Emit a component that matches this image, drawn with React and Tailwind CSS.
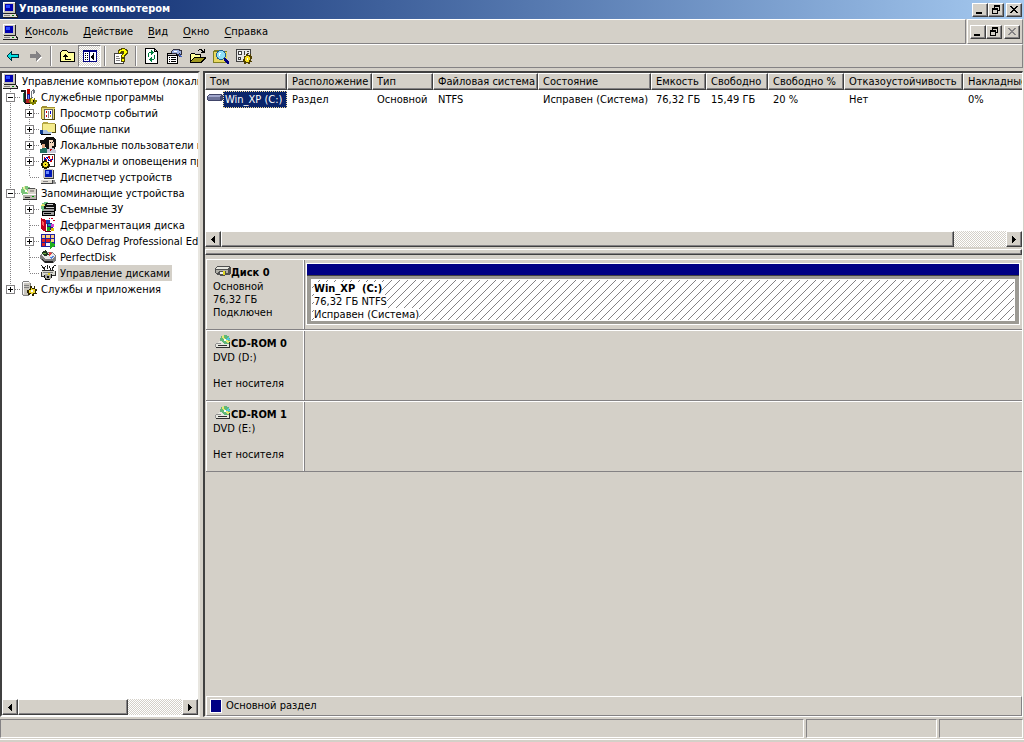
import React, { useState } from 'react';

/* ---------- icons ---------- */

function Icon({ children, className = '' }) {
  return (
    <svg viewBox="0 0 16 16" shapeRendering="crispEdges" className={`w-4 h-4 shrink-0 ${className}`} aria-hidden="true">
      {children}
    </svg>
  );
}

const ComputerIcon = () => (
  <Icon>
    <path d="M1 0h12v11H1z" fill="#c6c3bd" />
    <path d="M1 0h12v1H1zM1 0h1v10H1z" fill="#fff" />
    <path d="M3 2h8v7H3z" fill="#0000b0" />
    <path d="M4 3h4v3H4z" fill="#2a4cff" />
    <path d="M13 1h1v10h-1zM2 11h12v1H2z" fill="#202020" />
    <path d="M1 12h12l2 2v1H1z" fill="#dedbd2" />
    <path d="M2 13h6v1H2z" fill="#848284" />
    <path d="M10 13h2v1h-2z" fill="#008000" />
    <path d="M1 15h15v1H1zM14 12h1v1h1v3h-1v-2h-1z" fill="#202020" />
  </Icon>
);

const ToolsIcon = () => (
  <Icon>
    <path d="M0 1h5v2H0zM3 3h2v11H3z" fill="#202020" />
    <path d="M2 4h1v9H2z" fill="#2e8b57" />
    <path d="M6 0h3v5H6z" fill="#c00000" />
    <path d="M6 5h3v9H6z" fill="#1a1a90" />
    <path d="M7 6h1v7H7z" fill="#6b8cff" />
    <path d="M10 2l2-2 2 1v3l-2 1v4h-2z" fill="#707880" />
    <path d="M11 2h1v6h-1z" fill="#fff" />
    <path d="M5 10h4v4H5z" fill="#b02020" />
    <path d="M9 9h2v1h2V9h1v2h2v2h-1v2h-2v1h-2v-1H9v-2H8v-2h1z" fill="#808000" />
    <path d="M10 10h3v3h-3z" fill="#f0e040" />
    <path d="M12 11h1v2h-1zM4 14h5v1H4z" fill="#000" />
  </Icon>
);

const EventsIcon = () => (
  <Icon>
    <path d="M1 2l1-1h4l1 1h8v12H1z" fill="#e8dc7a" />
    <path d="M1 2l1-1h4l1 1h8v1H1zM1 2h1v12H1z" fill="#a09030" />
    <path d="M4 4h9v10H4z" fill="#fff" />
    <path d="M4 4h9v1H4zM4 4h1v10H4zM12 4h1v10h-1z" fill="#606060" />
    <path d="M6 6h1v2H6zM6 10h1v2H6z" fill="#d00000" />
    <path d="M8 6h1v7H8z" fill="#848284" />
    <path d="M10 6h1v3h-1z" fill="#0000c0" />
    <path d="M10 10h1v2h-1z" fill="#c8a000" />
    <path d="M2 14h13v1H2zM14 4h1v11h-1z" fill="#504810" />
  </Icon>
);

const SharedFolderIcon = () => (
  <Icon>
    <path d="M2 2l1-1h4l1 1h7v9H2z" fill="#f5eb8c" />
    <path d="M2 2l1-1h4l1 1h7v1H2zM2 2h1v8H2z" fill="#b5a642" />
    <path d="M15 3h1v9h-1zM7 11h9v1H7z" fill="#504810" />
    <path d="M0 9h3v4H0z" fill="#0a3a90" />
    <path d="M3 9h3l2 2h4v1l-2 1H3z" fill="#a8c0e0" />
    <path d="M3 13h8v1H3zM1 13h2v1H1z" fill="#000" />
  </Icon>
);

const UsersIcon = () => (
  <Icon>
    <path d="M4 2l3-2h6l3 3v6l-2 4H8L4 9z" fill="#101010" />
    <path d="M9 3h4v2h1v4h-2v2H9z" fill="#f4d8c0" />
    <path d="M10 5h1v1h-1zM12 5h1v1h-1z" fill="#101010" />
    <path d="M0 3h4l2 2v5H3L1 8z" fill="#101010" />
    <path d="M2 7h3v4H2z" fill="#e0a880" />
    <path d="M0 12l3-1h3l2 2v3H0z" fill="#207060" />
    <path d="M7 12l3-1h3l3 2v3H7z" fill="#c8c8d8" />
    <path d="M10 12l1 3 1-3z" fill="#c00000" />
  </Icon>
);

const PerfLogsIcon = () => (
  <Icon>
    <path d="M2 1h12v11H2z" fill="#fff" />
    <path d="M2 1h13v1H2zM2 1h1v12H2zM14 1h1v13h-1zM8 13h7v1H8z" fill="#303030" />
    <path d="M4 4l2 4 3-5 2 6 2-6" fill="none" stroke="#d00000" />
    <path d="M4 8l3-4 2 4 4-2" fill="none" stroke="#0000c0" />
    <path d="M4 7h2v1h1v1h2v2h1v2H9v2H7v1H4v-1H2v-2H1v-3h2V8h1z" fill="#202000" />
    <path d="M4 9h3v1h1v3H7v1H4v-1H3v-3h1z" fill="#f0e020" />
    <path d="M5 11h1v1H5z" fill="#000" />
  </Icon>
);

const DeviceIcon = () => (
  <Icon>
    <path d="M3 0h10v9H3z" fill="#c6c3bd" />
    <path d="M5 1h7v7H5z" fill="#0018b8" />
    <path d="M6 2h3v3H6z" fill="#6b8cff" />
    <path d="M13 1h1v9h-1zM4 9h9v1H4z" fill="#404040" />
    <path d="M1 11h11v3H1z" fill="#dedbd2" />
    <path d="M1 14h12v1H1zM12 11h1v3h-1z" fill="#404040" />
    <path d="M3 12h5v1H3z" fill="#848284" />
    <path d="M13 11h2v2h1v2h-3z" fill="#909090" />
  </Icon>
);

const StorageIcon = () => (
  <Icon>
    <circle cx="5" cy="6" r="5" fill="#7ac47a" />
    <path d="M5 6L1 3l3-2zM5 6h4l-1 4z" fill="#e8f0a0" />
    <circle cx="5" cy="6" r="1" fill="#fff" />
    <path d="M7 3h7l1 1v6H7z" fill="#d8d5cc" />
    <path d="M7 3h7v1H7zM15 4h1v11h-1z" fill="#505050" />
    <path d="M9 5h4v2H9z" fill="#a09c94" />
    <path d="M2 9h13v5H2z" fill="#b8b5ad" />
    <path d="M2 9h13v1H2z" fill="#fff" />
    <path d="M2 14h14v1H2zM4 12h5v1H4z" fill="#303030" />
    <path d="M11 11h2v1h-2z" fill="#00a000" />
  </Icon>
);

const RemovableIcon = () => (
  <Icon>
    <circle cx="6" cy="6" r="5" fill="#6cbf80" />
    <path d="M6 6L1 5l2-3z" fill="#e8e860" />
    <path d="M6 2h8l2 2v5l-2 2H4V6z" fill="#101010" />
    <path d="M7 3h6v1H7zM6 6h8v1H6z" fill="#d0d0d0" />
    <path d="M2 10l3-2h8l2 2v4H2z" fill="#a0a0a0" />
    <path d="M2 10h12v1H2zM2 14h13v1H2zM2 10h1v5H2zM14 9h1v5h-1zM4 12h7v1H4z" fill="#000" />
  </Icon>
);

const DefragIcon = () => (
  <Icon>
    <path d="M1 1l5 2v12l-5-3z" fill="#c00020" />
    <path d="M2 4l2 1v4L2 8z" fill="#ff6060" />
    <path d="M6 3h4v4H6z" fill="#2040c0" />
    <path d="M7 6h5l2 3-2 4H7z" fill="#202080" />
    <path d="M8 7h3v2H8z" fill="#00b0b0" />
    <path d="M11 7h3v3h-3z" fill="#d040d0" />
    <path d="M7 10h3v4H7z" fill="#20a020" />
    <path d="M11 11h3v3h-3z" fill="#e0c000" />
    <path d="M11 1h2v1h-2zM13 3h2v1h-2zM9 1h1v1H9z" fill="#c00020" />
    <path d="M5 14h6v1H5z" fill="#600010" />
  </Icon>
);

const OODefragIcon = () => (
  <Icon>
    <path d="M1 1h14v13H1z" fill="#2020a0" />
    <path d="M2 2h3v3H2zM6 2h4v3H6zM11 2h3v3h-3z" fill="#ffd080" />
    <path d="M2 6h3v3H2zM6 6h4v3H6z" fill="#e02020" />
    <path d="M11 6h3v3h-3z" fill="#ffd080" />
    <path d="M2 10h3v3H2z" fill="#e02020" />
    <path d="M6 10h4v3H6zM11 10h3v3h-3z" fill="#f4f4ff" />
    <path d="M10 8l6 4-6 4z" fill="#20b020" />
  </Icon>
);

const PerfectDiskIcon = () => (
  <Icon>
    <path d="M0 6l3-3h9l4 4v4l-3 3H5l-5-4z" fill="#808080" />
    <path d="M1 6l3-2h8l3 3-3 3H5z" fill="#e8e8e8" />
    <path d="M1 4l5-3 3 5-5 1z" fill="#203820" />
    <path d="M3 4h3v1H3z" fill="#70b040" />
    <path d="M9 3l4 1-4 3z" fill="#e04040" />
    <path d="M10 8l4-1-3 3z" fill="#5080e0" />
    <path d="M2 10l3 2h8v1l-1 1H5l-3-3z" fill="#202020" />
  </Icon>
);

const DiskMgmtIcon = () => (
  <Icon>
    <path d="M1 0h1v1h1v1h1v1h1v2H4V4H3V3H2V1H1zM5 1h1v1H5zM4 2h1v1H4zM7 0h1v4H7zM9 1h1v2h1v2h-1V3H9zM12 2h1V1h1v2h-1v2h-1zM14 0h2v1h-2z" fill="#202020" />
    <path d="M2 6l2-1h9l2 2v4H1V7z" fill="#d8d8d0" />
    <path d="M2 5h12v1H2zM1 7h1v4H1zM1 11h4v1H1zM15 6h1v5h-1zM11 10h4v1h-4z" fill="#303030" />
    <path d="M3 7h10v1H3z" fill="#808080" />
    <path d="M5 9h6v5H5z" fill="#a8a8a0" />
    <path d="M4 10h1v3H4zM5 13h1v1h4v1H5zM11 9h1v4h-1zM7 11h2v2H7z" fill="#101010" />
    <path d="M8 8h2v2H8z" fill="#e0d020" />
  </Icon>
);

const ServicesIcon = () => (
  <Icon>
    <path d="M2 1h6l1 1v12H2z" fill="#c8c5bd" />
    <path d="M2 1h6v1H2zM2 1h1v12H2z" fill="#f8f8f8" />
    <path d="M2 0h6v1H2zM1 1h1v13H1zM3 4h5v1H3zM3 6h5v1H3zM9 2h1v4H9zM2 14h6v1H2z" fill="#808080" />
    <path d="M9 5h2v2h2V5h1v3h2v2h-1v2h1v1h-3v2h-2v-2H9v1H7v-2H6v-3h2V8h1z" fill="#302800" />
    <path d="M10 7h1v1h3v4h-2v1h-2v-1H8V9h2z" fill="#f0d830" />
    <path d="M10 9h2v2h-2z" fill="#fff" />
  </Icon>
);

const BackIcon = () => (
  <Icon>
    <path d="M1 8h1V7h1V6h1V5h1V4h1V3h1v3h7v4H7v3H6v-1H5v-1H4v-1H3V9H2v-1z" fill="#003040" />
    <path d="M2 8h1V7h1V6h1V5h1v2h7v2H6v2H5v-1H4V9H3V8z" fill="#00e0e0" />
  </Icon>
);

const ForwardIcon = () => (
  <Icon>
    <path d="M15 9h-1v1h-1v1h-1v1h-1v1h-1v1H9v-4H3V9h9z" fill="#fff" />
    <path d="M14 8h-1V7h-1V6h-1V5h-1V4H9V3H8v3H2v4h6v3h1v-1h1v-1h1v-1h1V9h1V8z" fill="#848284" />
  </Icon>
);

const UpFolderIcon = () => (
  <Icon>
    <path d="M1 4h1V3h1V2h5v1h1v1h7v10H1z" fill="#000" />
    <path d="M2 4h1V3h5v1h1v1h6v8H2z" fill="#ffff9c" />
    <path d="M6 6h1v1h1v1h1v1H7v2h5v1H6V9H4V8h1V7h1z" fill="#000" />
  </Icon>
);

const TreePaneIcon = () => (
  <Icon>
    <path d="M1 2h14v12H1z" fill="#000080" />
    <path d="M2 4h5v9H2zM8 4h6v9H8z" fill="#fff" />
    <path d="M3 5h1v1H3zM5 5h1v1H5zM3 7h1v1H3zM5 7h1v1H5zM3 9h1v1H3zM5 9h1v1H5zM3 11h1v1H3zM5 11h1v1H5zM12 5v7h-1v-1h-1v-1H9V8h1V7h1V5z" fill="#000" />
  </Icon>
);

const HelpIcon = () => (
  <Icon>
    <path d="M1 5h10v11H1z" fill="#404040" />
    <path d="M2 6h8v9H2z" fill="#fff" />
    <path d="M3 8h3v1H3zM3 10h4v1H3zM3 12h4v1H3z" fill="#848284" />
    <path d="M5 2h1V1h2V0h4v1h2v1h1v4h-1v1h-1v1h-1v2H8V7h1V6h1V5H8v1H5zM8 10h4v4H8z" fill="#504800" />
    <path d="M6 3h1V2h2V1h3v1h1v1h1v2h-1v1h-1v1h-1v2H9V7h1V6h1V3H8v1H7v1H6zM9 11h2v2H9z" fill="#ffff00" />
  </Icon>
);

const RefreshIcon = () => (
  <Icon>
    <path d="M1 0h10v1h1v1h1v1h1v13H1z" fill="#000" />
    <path d="M2 1h8v3h3v11H2z" fill="#fff" />
    <path d="M11 2v1h1z" fill="#c6c3c6" />
    <path d="M7 2h1v1h1v1h1v1H9v1H8v1H7V5H5v4H4V5h1V4h2zM8 14H7v-1H6v-1H5v-1h1v-1h1V9h1v2h2V7h1v4h-1v1H8z" fill="#008040" />
  </Icon>
);

const PropertiesIcon = () => (
  <Icon>
    <path d="M0 5h11v11H0z" fill="#000" />
    <path d="M1 8h9v7H1z" fill="#fff" />
    <path d="M1 6h8v1H1z" fill="#c6c3c6" />
    <path d="M2 9h1v1H2zM4 9h5v1H4zM2 11h1v1H2zM4 11h5v1H4zM2 13h1v1H2zM4 13h5v1H4z" fill="#000" />
    <path d="M3 4l3-3h7v1h2v5h-2v2h-1L9 6H6z" fill="#303040" />
    <path d="M5 3l2-1h5l1 2-2 2-2-1H5zM13 3h1v3h-1z" fill="#9cb0e0" />
    <path d="M7 3h3v1H7z" fill="#fff" />
    <path d="M12 6l3 3h-1l-3-2z" fill="#4060c0" />
  </Icon>
);

const OpenIcon = () => (
  <Icon>
    <path d="M0 6h1V5h4v1h6v3h5v1l-4 5H0z" fill="#000" />
    <path d="M1 6h4v1h5v2H4l-3 4z" fill="#ffff9c" />
    <path d="M4 10h10l-3 4H1z" fill="#a09820" />
    <path d="M8 2h1V1h3v1h1v1h1V1h1v4h-4V4h1V3h-1V2H9v1H8z" fill="#000" />
  </Icon>
);

const SearchIcon = () => (
  <Icon>
    <path d="M0 3l1-1h4l1 1h8v11H0z" fill="#e8d860" />
    <path d="M0 3l1-1h4l1 1h8v1H0zM0 3h1v11H0zM0 14h14v1H0z" fill="#808020" />
    <circle cx="8" cy="7" r="5" fill="#206090" />
    <circle cx="8" cy="7" r="4" fill="#90e0f8" />
    <path d="M6 5h2v1H7v2H6z" fill="#fff" />
    <path d="M11 10h2l3 4v2h-2l-3-4z" fill="#000080" />
  </Icon>
);

const SettingsIcon = () => (
  <Icon>
    <path d="M0 1h15v13H0z" fill="#404040" />
    <path d="M1 2h13v11H1z" fill="#e8e8e8" />
    <path d="M2 3h4v4H2zM8 3h1v4H8zM11 3h2v1h-2zM11 5h2v1h-2zM2 9h3v3H2z" fill="#404040" />
    <path d="M3 4h2v2H3zM3 10h1v1H3z" fill="#fff" />
    <path d="M10 6h2v1h2V6h1v2h1v3h-1v2h1v1h-2v2h-2v-1h-2v1H8v-2H7v-3h1V8h2z" fill="#504000" />
    <path d="M10 8h3v1h1v3h-1v2h-3v-1H9V9h1z" fill="#f8e020" />
    <path d="M11 10h1v2h-1z" fill="#fff" />
  </Icon>
);

const VolumeIcon = () => (
  <Icon>
    <path d="M0 5l2-2h12l2 1v4l-2 2H1L0 9z" fill="#404468" />
    <path d="M1 5l1-1h12l-1 2H1z" fill="#a0a6cc" />
    <path d="M1 6h12v3H1z" fill="#6c7298" />
  </Icon>
);

const HardDiskIcon = () => (
  <Icon>
    <path d="M0 5l3-2h12l1 2v5l-2 2H2l-2-2z" fill="#505050" />
    <path d="M1 5l2-1h11l-1 2H1z" fill="#e8e8e0" />
    <path d="M1 7h12v3H1z" fill="#b0b0a8" />
    <path d="M4 8h7v4l-2 1H5l-2-2z" fill="#505050" />
    <path d="M5 9h3v2H5z" fill="#f0f0f0" />
    <path d="M8 8h2v4H8z" fill="#e0d820" />
  </Icon>
);

const CdIcon = () => (
  <Icon>
    <circle cx="10" cy="6" r="5" fill="#60b878" />
    <path d="M10 6L6 3l3-2zM10 6l3 4 2-3z" fill="#e8e870" />
    <path d="M10 6l4-3 1 3z" fill="#50c8e0" />
    <circle cx="10" cy="6" r="1" fill="#fff" />
    <path d="M1 10l3-3h2l3 3h5v3H1z" fill="#e8e8e0" />
    <path d="M14 8h1v5h-1zM1 13h14v1H1zM3 11h9v1H3z" fill="#303030" />
    <path d="M0 10h1v3H0zM1 9h5v1H1z" fill="#909090" />
  </Icon>
);

/* ---------- small controls ---------- */

const raised = 'bg-[#d4d0c8] border border-t-white border-l-white border-r-[#404040] border-b-[#404040] shadow-[inset_-1px_-1px_0_#848284]';

function CaptionButton({ kind, disabled }) {
  return (
    <button aria-label={kind} disabled={disabled} className={`w-4 h-[14px] grid place-items-center ${raised}`}>
      <svg viewBox="0 0 12 10" shapeRendering="crispEdges" className="w-3 h-[10px]">
        {kind === 'minimize' && <path d="M2 7h6v2H2z" />}
        {kind === 'restore' && <path d="M4 0h6v6H8V5h1V2H5v1H4zM2 3h6v6H2zM3 5v3h4V5z" fillRule="evenodd" />}
        {kind === 'close' && (
          <path
            d="M2 1h2v1h1v1h2V2h1V1h2v1H9v1H8v1H7v1h1v1h1v1h1v1H8V7H7V6H5v1H4v1H2V7h1V6h1V5h1V4H4V3H3V2H2z"
            fill={disabled ? '#848284' : '#000'}
          />
        )}
      </svg>
    </button>
  );
}

function CaptionButtons({ closeDisabled }) {
  return (
    <div className="flex">
      <CaptionButton kind="minimize" />
      <CaptionButton kind="restore" />
      <div className="ml-0.5 flex">
        <CaptionButton kind="close" disabled={closeDisabled} />
      </div>
    </div>
  );
}

function ScrollBar({ thumb }) {
  return (
    <div className="flex h-4 shrink-0 bg-[repeating-conic-gradient(#ffffff_0_25%,#d4d0c8_0_50%)] bg-[length:2px_2px]">
      <button aria-label="scroll left" className={`w-4 grid place-items-center ${raised}`}>
        <svg viewBox="0 0 4 7" shapeRendering="crispEdges" className="w-1 h-[7px]"><path d="M4 0v7L0 4V3z" /></svg>
      </button>
      <div className="grow">
        <div className={`h-full ${raised}`} style={{ width: `${thumb}%` }}></div>
      </div>
      <button aria-label="scroll right" className={`w-4 grid place-items-center ${raised}`}>
        <svg viewBox="0 0 4 7" shapeRendering="crispEdges" className="w-1 h-[7px]"><path d="M0 0v7l4-3V3z" /></svg>
      </button>
    </div>
  );
}

/* ---------- data ---------- */

const menus = ['Консоль', 'Действие', 'Вид', 'Окно', 'Справка'];

const tree = [
  {
    label: 'Служебные программы', icon: ToolsIcon, children: [
      { label: 'Просмотр событий', icon: EventsIcon, more: true },
      { label: 'Общие папки', icon: SharedFolderIcon, more: true },
      { label: 'Локальные пользователи и группы', icon: UsersIcon, more: true },
      { label: 'Журналы и оповещения производительности', icon: PerfLogsIcon, more: true },
      { label: 'Диспетчер устройств', icon: DeviceIcon },
    ],
  },
  {
    label: 'Запоминающие устройства', icon: StorageIcon, children: [
      { label: 'Съемные ЗУ', icon: RemovableIcon, more: true },
      { label: 'Дефрагментация диска', icon: DefragIcon },
      { label: 'O&O Defrag Professional Edition', icon: OODefragIcon, more: true },
      { label: 'PerfectDisk', icon: PerfectDiskIcon },
      { label: 'Управление дисками', icon: DiskMgmtIcon },
    ],
  },
  { label: 'Службы и приложения', icon: ServicesIcon, more: true },
];

const columns = [
  { title: 'Том', width: 'w-[82px]' },
  { title: 'Расположение', width: 'w-[85px]', value: 'Раздел' },
  { title: 'Тип', width: 'w-[61px]', value: 'Основной' },
  { title: 'Файловая система', width: 'w-[105px]', value: 'NTFS' },
  { title: 'Состояние', width: 'w-[113px]', value: 'Исправен (Система)' },
  { title: 'Емкость', width: 'w-[55px]', value: '76,32 ГБ' },
  { title: 'Свободно', width: 'w-[62px]', value: '15,49 ГБ' },
  { title: 'Свободно %', width: 'w-[76px]', value: '20 %' },
  { title: 'Отказоустойчивость', width: 'w-[119px]', value: 'Нет' },
  { title: 'Накладные расходы', width: 'w-[120px]', value: '0%' },
];

const cdroms = [
  { name: 'CD-ROM 0', letter: 'DVD (D:)' },
  { name: 'CD-ROM 1', letter: 'DVD (E:)' },
];

/* ---------- tree ---------- */

// One indent step: dotted connector with an optional +/- box over it
function Branch({ line, box, onToggle }) {
  const lines = {
    tee: 'M8.5 0v16M9 8.5h10',
    corner: 'M8.5 0v8M9 8.5h10',
    pass: 'M8.5 0v16',
    none: '',
  };
  return (
    <div className="grid w-[19px] h-4 shrink-0">
      <svg viewBox="0 0 19 16" shapeRendering="crispEdges" className="col-start-1 row-start-1 w-[19px] h-4">
        <path d={lines[line]} fill="none" stroke="#848284" strokeDasharray="1 1" />
      </svg>
      {box && (
        <button aria-label="toggle" onClick={onToggle} className="col-start-1 row-start-1 w-[9px] h-[9px] ml-1 mt-1 bg-white">
          <svg viewBox="0 0 9 9" shapeRendering="crispEdges" className="w-[9px] h-[9px]">
            <path d="M0 0h9v9H0zM1 1v7h7V1z" fill="#848284" fillRule="evenodd" />
            <path d={box === 'plus' ? 'M2 4h5v1H2zM4 2h1v5H4z' : 'M2 4h5v1H2z'} />
          </svg>
        </button>
      )}
    </div>
  );
}

function TreeLabel({ icon: NodeIcon, label, selected }) {
  return (
    <>
      <NodeIcon />
      <span className={`ml-0.5 px-0.5 pt-0.5 leading-[14px] ${selected ? 'bg-[#d4d0c8]' : ''}`}>{label}</span>
    </>
  );
}

function Tree() {
  const [closed, setClosed] = useState({});
  const [selected, setSelected] = useState('Управление дисками');

  const toggle = (label) => setClosed((prev) => ({ ...prev, [label]: !prev[label] }));

  return (
    <ul className="grow overflow-hidden whitespace-nowrap">
      <li className="flex h-4">
        <TreeLabel icon={ComputerIcon} label="Управление компьютером (локальным)" />
      </li>
      {tree.map((node, i) => {
        const last = i === tree.length - 1;
        const open = node.children && !closed[node.label];
        return (
          <li key={node.label}>
            <div className="flex h-4">
              <Branch line={last ? 'corner' : 'tee'} box={open ? 'minus' : 'plus'} onToggle={() => toggle(node.label)} />
              <TreeLabel icon={node.icon} label={node.label} />
            </div>
            {open && (
              <ul>
                {node.children.map((child, j) => (
                  <li key={child.label} className="flex h-4" onClick={() => setSelected(child.label)}>
                    <Branch line={last ? 'none' : 'pass'} />
                    <Branch line={j === node.children.length - 1 ? 'corner' : 'tee'} box={child.more && 'plus'} />
                    <TreeLabel icon={child.icon} label={child.label} selected={selected === child.label} />
                  </li>
                ))}
              </ul>
            )}
          </li>
        );
      })}
    </ul>
  );
}

/* ---------- toolbar ---------- */

function ToolButton({ label, pressed, children }) {
  return (
    <button
      aria-label={label}
      className={`w-[23px] h-[22px] grid place-items-center ${pressed ? 'border border-t-[#848284] border-l-[#848284] border-r-white border-b-white bg-[repeating-conic-gradient(#ffffff_0_25%,#d4d0c8_0_50%)] bg-[length:2px_2px]' : ''}`}
    >
      {children}
    </button>
  );
}

const Separator = () => <div className="w-0.5 h-5 mx-[3px] border-l border-l-[#848284] border-r border-r-white"></div>;

/* ---------- disks ---------- */

function DiskRow({ icon: DiskIcon, name, lines, children }) {
  return (
    <div className="flex h-[71px] border-t border-t-white border-b border-b-[#848284]">
      <div className="w-[98px] shrink-0 pt-1.5 pl-1.5 border-x border-x-white leading-[13px]">
        <div className="flex items-end h-[13px] mb-px pl-0.5 font-bold whitespace-nowrap">
          <DiskIcon />
          {name}
        </div>
        {lines.map((line, i) => (
          <div key={i} className="h-[13px]">{line}</div>
        ))}
      </div>
      <div className="grow border-l border-l-[#848284]">{children}</div>
    </div>
  );
}

function Partition() {
  return (
    <div className="mt-[3px] mx-px mr-0.5 border border-white bg-[#9c9a94]">
      <div className="h-3 bg-[#000084] border-b border-b-[#404040]"></div>
      <div className="px-1 py-[3px]">
        <div className="h-[42px] border border-white pt-0.5 pl-0.5 leading-[13px] bg-white bg-[linear-gradient(135deg,transparent_46%,#848284_46%_54%,transparent_54%)] bg-[length:8px_8px]">
          <div><span className="bg-white font-bold whitespace-pre">Win_XP  (C:)</span></div>
          <div><span className="bg-white">76,32 ГБ NTFS</span></div>
          <div><span className="bg-white">Исправен (Система)</span></div>
        </div>
      </div>
    </div>
  );
}

function App() {
  return (
    <div className="flex flex-col h-screen overflow-hidden bg-[#d4d0c8] text-black text-[11px] font-['DejaVu_Sans_Condensed','DejaVu_Sans',sans-serif]">
      <header className="flex items-center h-[19px] shrink-0 pl-0.5 pr-0.5 bg-linear-to-r from-[#0a246a] to-[#a6caf0] text-white">
        <ComputerIcon />
        <h1 className="grow ml-px font-bold">Управление компьютером</h1>
        <CaptionButtons />
      </header>

      <div className="flex h-[25px] shrink-0 pr-px">
        <nav className="flex grow items-center pl-0.5 border-t border-t-white border-b border-b-[#848284] border-r border-r-[#848284]">
          <ComputerIcon />
          <div className="flex">
            {menus.map((item) => (
              <button key={item} className="pl-[7px] pr-2 pt-px">
                <span className="underline underline-offset-2">{item[0]}</span>{item.slice(1)}
              </button>
            ))}
          </div>
        </nav>
        <div className="flex items-center px-0.5 ml-px border-t border-t-white border-l border-l-white border-b border-b-[#848284] border-r border-r-[#848284]">
          <CaptionButtons closeDisabled />
        </div>
      </div>

      <div className="flex items-center h-6 shrink-0 mr-px pl-px border-t border-t-white border-b border-b-[#848284] border-r border-r-[#848284]">
        <ToolButton label="Назад"><BackIcon /></ToolButton>
        <ToolButton label="Вперед"><ForwardIcon /></ToolButton>
        <Separator />
        <ToolButton label="Вверх"><UpFolderIcon /></ToolButton>
        <ToolButton label="Дерево консоли" pressed><TreePaneIcon /></ToolButton>
        <Separator />
        <ToolButton label="Справка"><HelpIcon /></ToolButton>
        <Separator />
        <ToolButton label="Обновить"><RefreshIcon /></ToolButton>
        <ToolButton label="Свойства"><PropertiesIcon /></ToolButton>
        <ToolButton label="Открыть"><OpenIcon /></ToolButton>
        <ToolButton label="Найти"><SearchIcon /></ToolButton>
        <ToolButton label="Параметры"><SettingsIcon /></ToolButton>
      </div>

      <main className="flex grow min-h-0 gap-[3px] mt-[3px] pr-px">
        <aside className="flex flex-col w-[200px] shrink-0 bg-white border-2 border-t-[#404040] border-l-[#404040] border-r-[#e8e6e0] border-b-white">
          <Tree />
          <ScrollBar thumb={67} />
        </aside>

        <section className="flex flex-col grow min-w-0 border-t-2 border-l-2 border-r border-b border-t-[#404040] border-l-[#404040] border-r-white border-b-white">
          <div className="flex flex-col h-[174px] shrink-0 bg-white overflow-hidden">
            <div className="grow overflow-hidden">
              <table className="table-fixed w-[878px] whitespace-nowrap border-separate border-spacing-0">
                <thead>
                  <tr>
                    {columns.map((col) => (
                      <th key={col.title} className={`${col.width} h-[17px] p-0 pl-1 pt-px text-left font-normal leading-[14px] overflow-hidden ${raised}`}>
                        {col.title}
                      </th>
                    ))}
                  </tr>
                </thead>
                <tbody>
                  <tr>
                    {columns.map((col, i) => (
                      i === 0 ? (
                        <td key={col.title} className="p-0 pl-0.5 pt-px">
                          <div className="flex h-[17px]">
                            <VolumeIcon />
                            <span className="grow pl-px leading-[15px] bg-[#0a246a] text-white border border-dotted border-[#f5db95]">Win_XP (C:)</span>
                          </div>
                        </td>
                      ) : (
                        <td key={col.title} className="p-0 pl-[5px] pt-0.5">{col.value}</td>
                      )
                    ))}
                  </tr>
                </tbody>
              </table>
            </div>
            <ScrollBar thumb={93.4} />
          </div>

          <div className={`h-1.5 mt-0.5 mb-1 shrink-0 ${raised}`}></div>

          <div className="grow pl-px">
            <DiskRow icon={HardDiskIcon} name="Диск 0" lines={['Основной', '76,32 ГБ', 'Подключен']}>
              <Partition />
            </DiskRow>
            {cdroms.map((cd) => (
              <DiskRow key={cd.name} icon={CdIcon} name={cd.name} lines={[cd.letter, '', 'Нет носителя']} />
            ))}
          </div>

          <div className="flex items-center h-5 shrink-0 ml-px pl-[3px] gap-1 border border-t-white border-l-white border-r-[#848284] border-b-[#848284]">
            <div className="w-3 h-[14px] bg-[#000084] border border-white"></div>
            Основной раздел
          </div>
        </section>
      </main>

      <footer className="flex gap-0.5 h-[19px] shrink-0 mt-0.5 pr-px">
        <div className="grow border border-t-[#848284] border-l-[#848284] border-r-white border-b-white"></div>
        <div className="w-[131px] border border-t-[#848284] border-l-[#848284] border-r-white border-b-white"></div>
        <div className="w-[84px] border border-t-[#848284] border-l-[#848284] border-r-white border-b-white"></div>
      </footer>
      <div className="h-[3px] mt-px shrink-0 border-t border-t-white"></div>
    </div>
  );
}

export default App;
